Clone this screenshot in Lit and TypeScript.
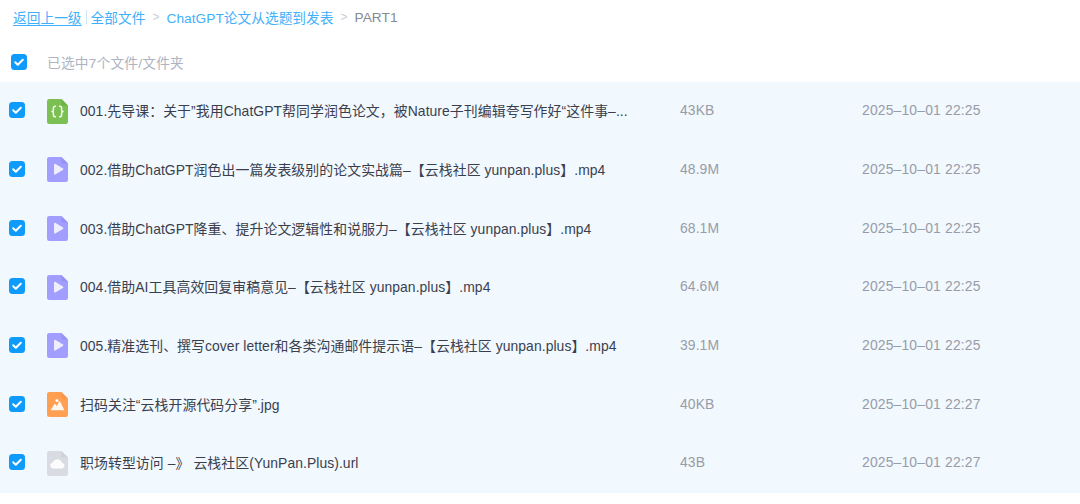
import { LitElement, html, css, svg } from "lit";
import { customElement } from "lit/decorators.js";

type Kind = "code" | "video" | "image" | "link";
const rows: { kind: Kind; name: string; size: string; time: string }[] = [
  { kind: "code", name: "001.先导课：关于”我用ChatGPT帮同学润色论文，被Nature子刊编辑夸写作好“这件事–...", size: "43KB", time: "2025–10–01 22:25" },
  { kind: "video", name: "002.借助ChatGPT润色出一篇发表级别的论文实战篇–【云栈社区 yunpan.plus】.mp4", size: "48.9M", time: "2025–10–01 22:25" },
  { kind: "video", name: "003.借助ChatGPT降重、提升论文逻辑性和说服力–【云栈社区 yunpan.plus】.mp4", size: "68.1M", time: "2025–10–01 22:25" },
  { kind: "video", name: "004.借助AI工具高效回复审稿意见–【云栈社区 yunpan.plus】.mp4", size: "64.6M", time: "2025–10–01 22:25" },
  { kind: "video", name: "005.精准选刊、撰写cover letter和各类沟通邮件提示语–【云栈社区 yunpan.plus】.mp4", size: "39.1M", time: "2025–10–01 22:25" },
  { kind: "image", name: "扫码关注“云栈开源代码分享”.jpg", size: "40KB", time: "2025–10–01 22:27" },
  { kind: "link", name: "职场转型访问 –》 云栈社区(YunPan.Plus).url", size: "43B", time: "2025–10–01 22:27" },
];

const colors: Record<Kind, [string, string]> = {
  code: ["#7cbf52", "#5fa83c"],
  video: ["#a29eff", "#8a86f5"],
  image: ["#ff9f52", "#ff8a3c"],
  link: ["#d8dbe1", "#c8ccd4"],
};

const glyph = (k: Kind) => {
  if (k === "code")
    return svg`<g fill="none" stroke="#fff" stroke-opacity=".92" stroke-width="1.5" stroke-linecap="round" stroke-linejoin="round">
      <path d="M8.4 7.2c-1.7 0-2 .7-2 1.8v1.7c0 1-.4 1.6-1.4 1.8 1 .2 1.4.8 1.4 1.8V16c0 1.1.3 1.8 2 1.8"/>
      <path d="M12.6 7.2c1.7 0 2 .7 2 1.8v1.7c0 1 .4 1.6 1.4 1.8-1 .2-1.4.8-1.4 1.8V16c0 1.1-.3 1.8-2 1.8"/></g>`;
  if (k === "video")
    return svg`<path d="M7 7.6c0-.7.7-1.1 1.3-.8l7.6 4.6c.6.3.6 1.2 0 1.5l-7.6 4.6c-.6.3-1.3-.1-1.3-.8z" fill="#fff" fill-opacity=".82"/>`;
  if (k === "image")
    return svg`<circle cx="10" cy="8.4" r="1.5" fill="#fff" fill-opacity=".95"/><path d="M3.6 18.2l3.7-5.9c.3-.4.8-.4 1.1 0l1.3 1.8 2.4-4.4c.3-.5.9-.5 1.2 0l4.1 8.5z" fill="#fff" fill-opacity=".9"/>`;
  return svg`<path d="M6.4 17.4c-1.9 0-3.1-1.3-3.1-2.9 0-1.5 1.1-2.7 2.6-2.9.5-2 2.3-3.3 4.5-3.3s4 1.4 4.5 3.4c1.5.2 2.6 1.4 2.6 2.8 0 1.6-1.2 2.9-3 2.9z" fill="#fff" fill-opacity=".92"/>`;
};

@customElement("app-root")
export class AppRoot extends LitElement {
  static styles = css`
    :host {
      display: block;
      width: 1080px;
      height: 504px;
      background: #fff;
      overflow: hidden;
      font-family: "Liberation Sans", "Noto Sans CJK SC", sans-serif;
    }
    .crumbs {
      display: flex;
      align-items: center;
      height: 34px;
      margin-bottom: 8px;
      padding-left: 13px;
      font-size: 13.7px;
      letter-spacing: 0.03px;
      color: #3fb0fb;
      white-space: nowrap;
    }
    .back {
      text-decoration: underline;
      text-underline-offset: 2px;
    }
    .bar {
      width: 1px;
      height: 14px;
      background: #cfe3f5;
      margin: 0 4px 0 4px;
    }
    .sep {
      color: #c6cdd6;
      margin: 0 7px 0 7px;
      font-size: 12px;
    }
    .cur {
      color: #858a93;
      font-size: 13.7px;
    }
    .selected {
      display: flex;
      align-items: center;
      height: 40px;
      padding-left: 11px;
      gap: 20px;
      font-size: 13.7px;
      letter-spacing: 0.22px;
      color: #aeb3c0;
    }
    .rows {
      display: flex;
      flex-direction: column;
      background: #f1f8fe;
    }
    .row {
      display: flex;
      align-items: center;
      height: 58.7px;
      padding: 0 0 2.4px 9px;
      box-sizing: border-box;
    }
    .check {
      width: 16px;
      height: 16px;
      flex: none;
      display: block;
    }
    .icon {
      width: 21px;
      height: 25px;
      flex: none;
      display: block;
      margin: 2px 0 0 22px;
    }
    .name {
      width: 600px;
      margin-left: 12px;
      font-size: 13.9px;
      letter-spacing: 0.07px;
      color: #3a3f4f;
      white-space: nowrap;
      overflow: hidden;
    }
    .size {
      width: 182px;
      font-size: 13.9px;
      letter-spacing: 0.1px;
      color: #989ca8;
    }
    .time {
      font-size: 13.9px;
      letter-spacing: 0.17px;
      color: #989ca8;
      white-space: nowrap;
    }
  `;

  private check() {
    return html`<svg class="check" viewBox="0 0 16 16" aria-hidden="true">
      <rect width="16" height="16" rx="3.5" fill="#0f9bfb"></rect>
      <path d="M4.2 8.2l2.6 2.5 5-5" fill="none" stroke="#fff" stroke-width="2" stroke-linecap="round" stroke-linejoin="round"></path>
    </svg>`;
  }

  private icon(k: Kind) {
    const [a, b] = colors[k];
    return html`<svg class="icon" viewBox="0 0 21 25" aria-hidden="true">
      <path d="M2.2 0H14.4L21 6.6V22.8a2.2 2.2 0 0 1-2.2 2.2H2.2A2.2 2.2 0 0 1 0 22.8V2.2A2.2 2.2 0 0 1 2.2 0z" fill="${a}"></path>
      <path d="M14.4 0L21 6.6H16a1.6 1.6 0 0 1-1.6-1.6z" fill="${b}" fill-opacity=".55"></path>
      ${glyph(k)}
    </svg>`;
  }

  render() {
    return html`
      <div class="crumbs">
        <span class="back">返回上一级</span><span class="bar"></span><span>全部文件</span
        ><span class="sep">&gt;</span><span>ChatGPT论文从选题到发表</span><span class="sep">&gt;</span
        ><span class="cur">PART1</span>
      </div>
      <div class="selected">${this.check()}<span>已选中7个文件/文件夹</span></div>
      <div class="rows">
        ${rows.map(
          (r) => html`<div class="row">
            ${this.check()}${this.icon(r.kind)}
            <div class="name">${r.name}</div>
            <div class="size">${r.size}</div>
            <div class="time">${r.time}</div>
          </div>`
        )}
      </div>
    `;
  }
}
